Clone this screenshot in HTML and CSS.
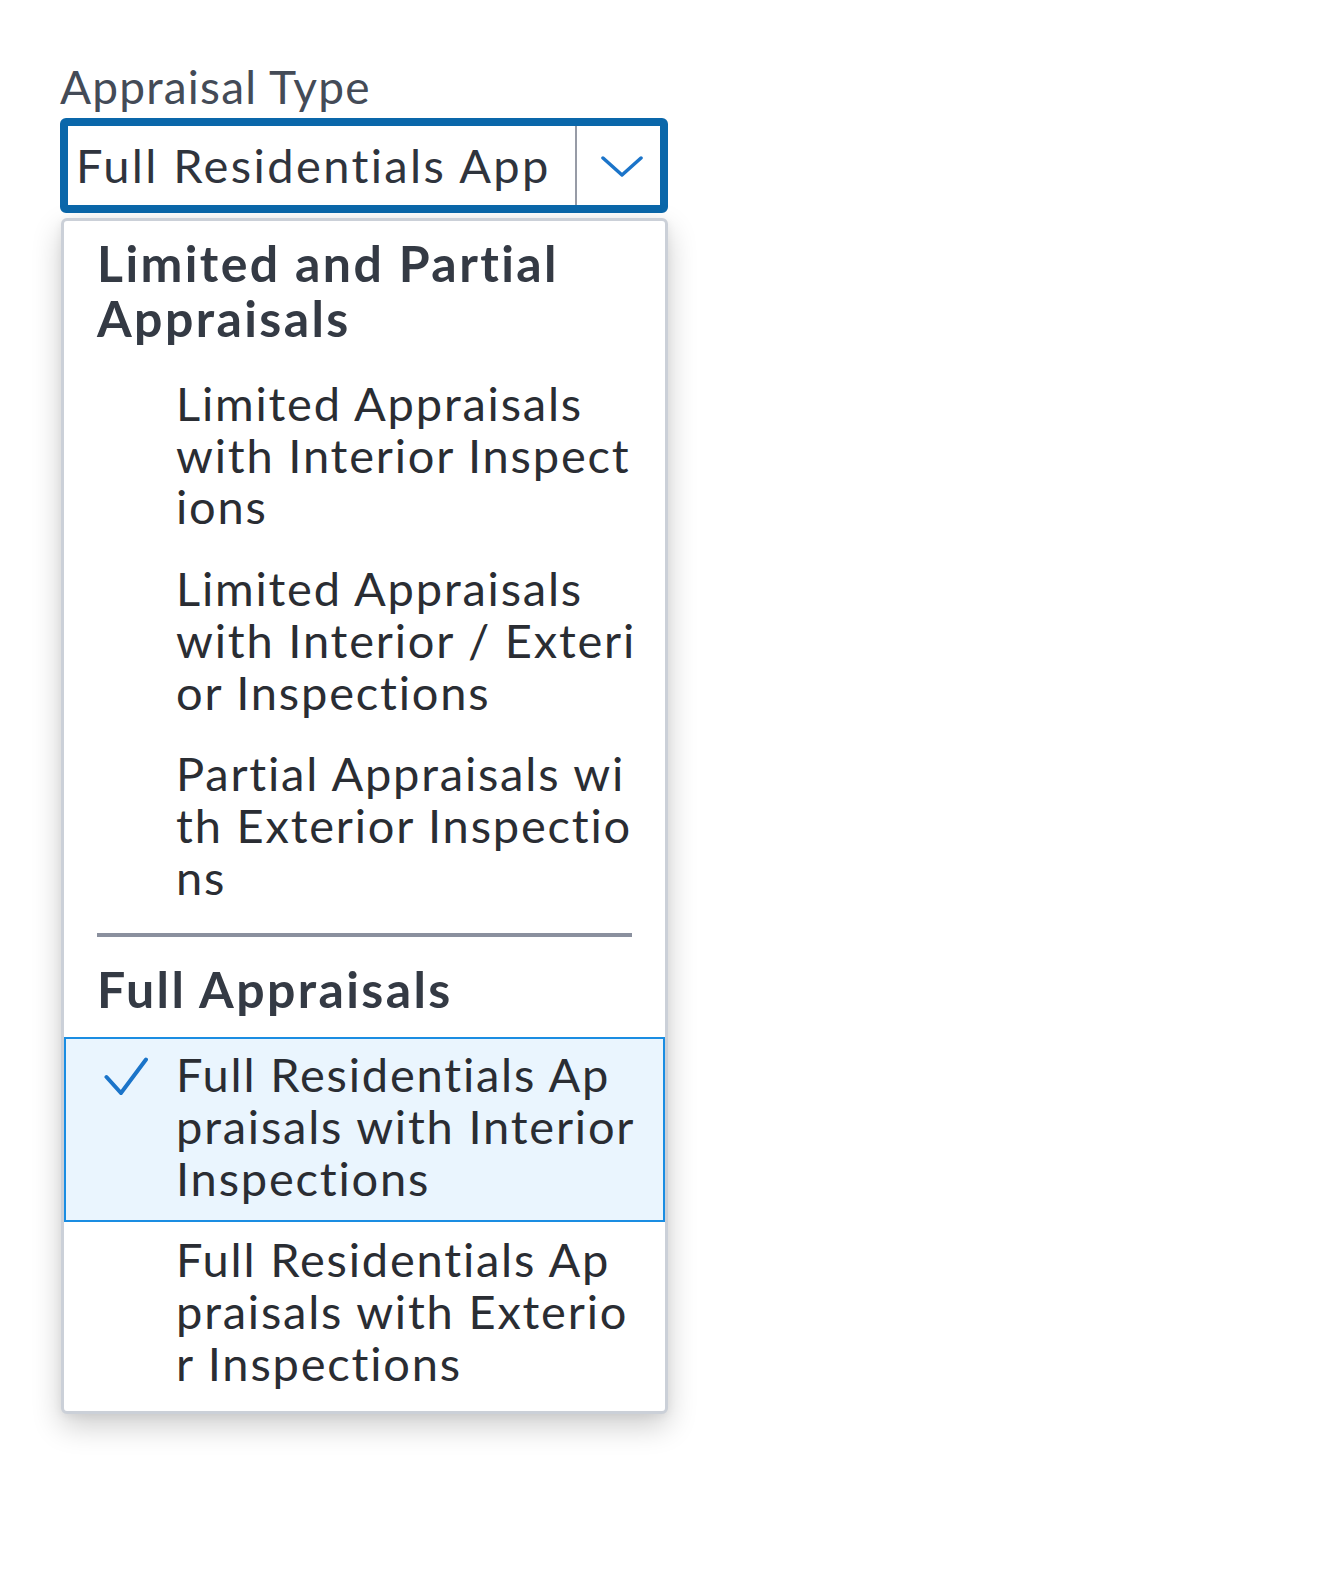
FILE: index.html
```html
<!DOCTYPE html>
<html lang="en">
<head>
<meta charset="utf-8">
<title>Appraisal Type</title>
<link rel="stylesheet" href="styles.css">
</head>
<body>
<div class="field">
  <label class="field-label">Appraisal Type</label>
  <div class="combobox">
    <div class="combobox-value">Full Residentials App</div>
    <div class="combobox-toggle">
      <svg class="chevron" width="44" height="22" viewBox="0 0 44 22"><path d="M3 3 L22 20 L41 3" fill="none" stroke="#1b74c9" stroke-width="3.5" stroke-linecap="round" stroke-linejoin="round"/></svg>
    </div>
  </div>
  <div class="listbox">
    <div class="group-header">Limited and Partial Appraisals</div>
    <div class="option">
      <span class="check-slot"></span>
      <span class="option-text">Limited Appraisals<br>with Interior Inspect<br>ions</span>
    </div>
    <div class="option">
      <span class="check-slot"></span>
      <span class="option-text">Limited Appraisals<br>with Interior / Exteri<br>or Inspections</span>
    </div>
    <div class="option">
      <span class="check-slot"></span>
      <span class="option-text">Partial Appraisals wi<br>th Exterior Inspectio<br>ns</span>
    </div>
    <div class="group-divider"></div>
    <div class="group-header">Full Appraisals</div>
    <div class="option option-selected">
      <span class="check-slot">
        <svg class="check" width="44" height="38" viewBox="0 0 44 38"><path d="M2.5 20 L17 36 L42 2.5" fill="none" stroke="#1b74c9" stroke-width="4" stroke-linecap="round" stroke-linejoin="miter"/></svg>
      </span>
      <span class="option-text">Full Residentials Ap<br>praisals with Interior<br>Inspections</span>
    </div>
    <div class="option">
      <span class="check-slot"></span>
      <span class="option-text">Full Residentials Ap<br>praisals with Exterio<br>r Inspections</span>
    </div>
  </div>
</div>
</body>
</html>
```
FILE: styles.css
```css
html, body {
  margin: 0;
  padding: 0;
  background: #ffffff;
}

body {
  font-family: "Lato", "Liberation Sans", sans-serif;
  color: #2b2e34;
  min-height: 100vh;
}

.field {
  padding: 61px 0 120px 60px;
  width: 608px;
}

.field-label {
  display: block;
  font-size: 46px;
  line-height: 52px;
  letter-spacing: 1.2px;
  color: #444b57;
  margin-bottom: 5px;
}

.combobox {
  box-sizing: border-box;
  width: 608px;
  height: 95px;
  border: 8px solid #0a67aa;
  border-radius: 6px;
  display: flex;
  align-items: stretch;
  background: #fff;
}

.combobox-value {
  flex: 1;
  display: flex;
  align-items: center;
  padding-left: 8px;
  font-size: 47px;
  line-height: 79px;
  letter-spacing: 2.4px;
  color: #2f343d;
  white-space: nowrap;
  overflow: hidden;
}

.combobox-toggle {
  width: 85px;
  border-left: 2px solid #979ba6;
  display: flex;
  align-items: center;
  justify-content: center;
  padding-left: 6px;
  box-sizing: border-box;
}

.chevron {
  display: block;
}

.listbox {
  box-sizing: border-box;
  width: 607px;
  margin: 5px 0 0 1px;
  border: 3px solid #cbd0d8;
  border-radius: 6px;
  background: #fff;
  padding-bottom: 3px;
  box-shadow: 0 12px 30px rgba(0, 0, 0, 0.2), 0 2px 10px rgba(0, 0, 0, 0.06);
}

.group-header {
  font-weight: 700;
  font-size: 50px;
  line-height: 55px;
  letter-spacing: 2.4px;
  color: #343a44;
  padding: 15px 33px 20px 33px;
}

.group-divider {
  height: 4px;
  background: #8a909e;
  margin: 12px 33px 10px 33px;
}

.option {
  display: flex;
  align-items: flex-start;
  padding: 12px 0 18px 0;
}

.option-selected {
  background: #eaf5fe;
  box-shadow: inset 0 0 0 2px #1a8de2;
}

.check-slot {
  flex: 0 0 112px;
  box-sizing: border-box;
  padding-left: 40px;
}

.check {
  display: block;
  margin-top: 8px;
}

.option-text {
  font-size: 47px;
  line-height: 51.7px;
  letter-spacing: 1.8px;
  color: #2a2d33;
  white-space: nowrap;
}
```
